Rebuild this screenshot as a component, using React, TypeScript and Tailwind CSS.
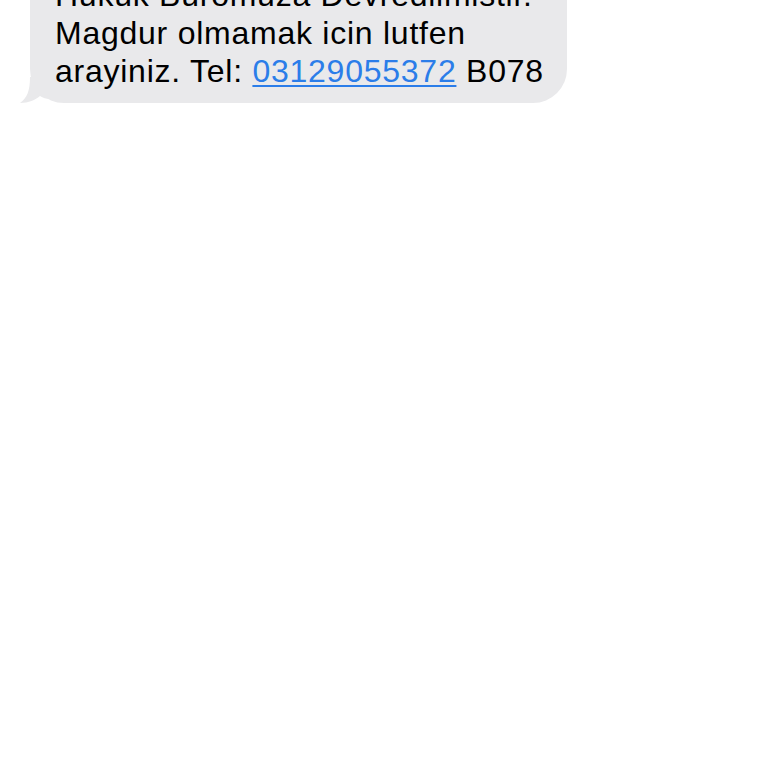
export default function App() {
  return (
    <div className="min-h-screen w-full bg-white overflow-hidden" style={{ fontFamily: '"Liberation Sans", Arial, sans-serif' }}>
      <div className="pl-[30px] -mt-[34px]">
        <div className="relative w-[537px] rounded-[34px] bg-[#e9e9eb] pl-[25px] pr-4 pt-[10px] pb-[13px] text-[32px] leading-[38px] tracking-[0.75px] text-black">
          {/* message tail */}
          <svg
            className="absolute -left-[10px] bottom-0"
            width="30"
            height="26"
            viewBox="0 0 30 26"
          >
            <path
              d="M10 0 C10 14 7 21 0 26 C9 26 15 23 20 19 C23 21 26 22 30 22 L30 0 Z"
              fill="#e9e9eb"
            />
          </svg>
          <div className="relative">
            <p>Hukuk Buromuza Devredilmistir.</p>
            <p>Magdur olmamak icin lutfen</p>
            <p>
              arayiniz. Tel:{" "}
              <a className="text-[#2b7de9] underline decoration-2 underline-offset-[3px]">03129055372</a> B078
            </p>
          </div>
        </div>
      </div>
    </div>
  );
}
